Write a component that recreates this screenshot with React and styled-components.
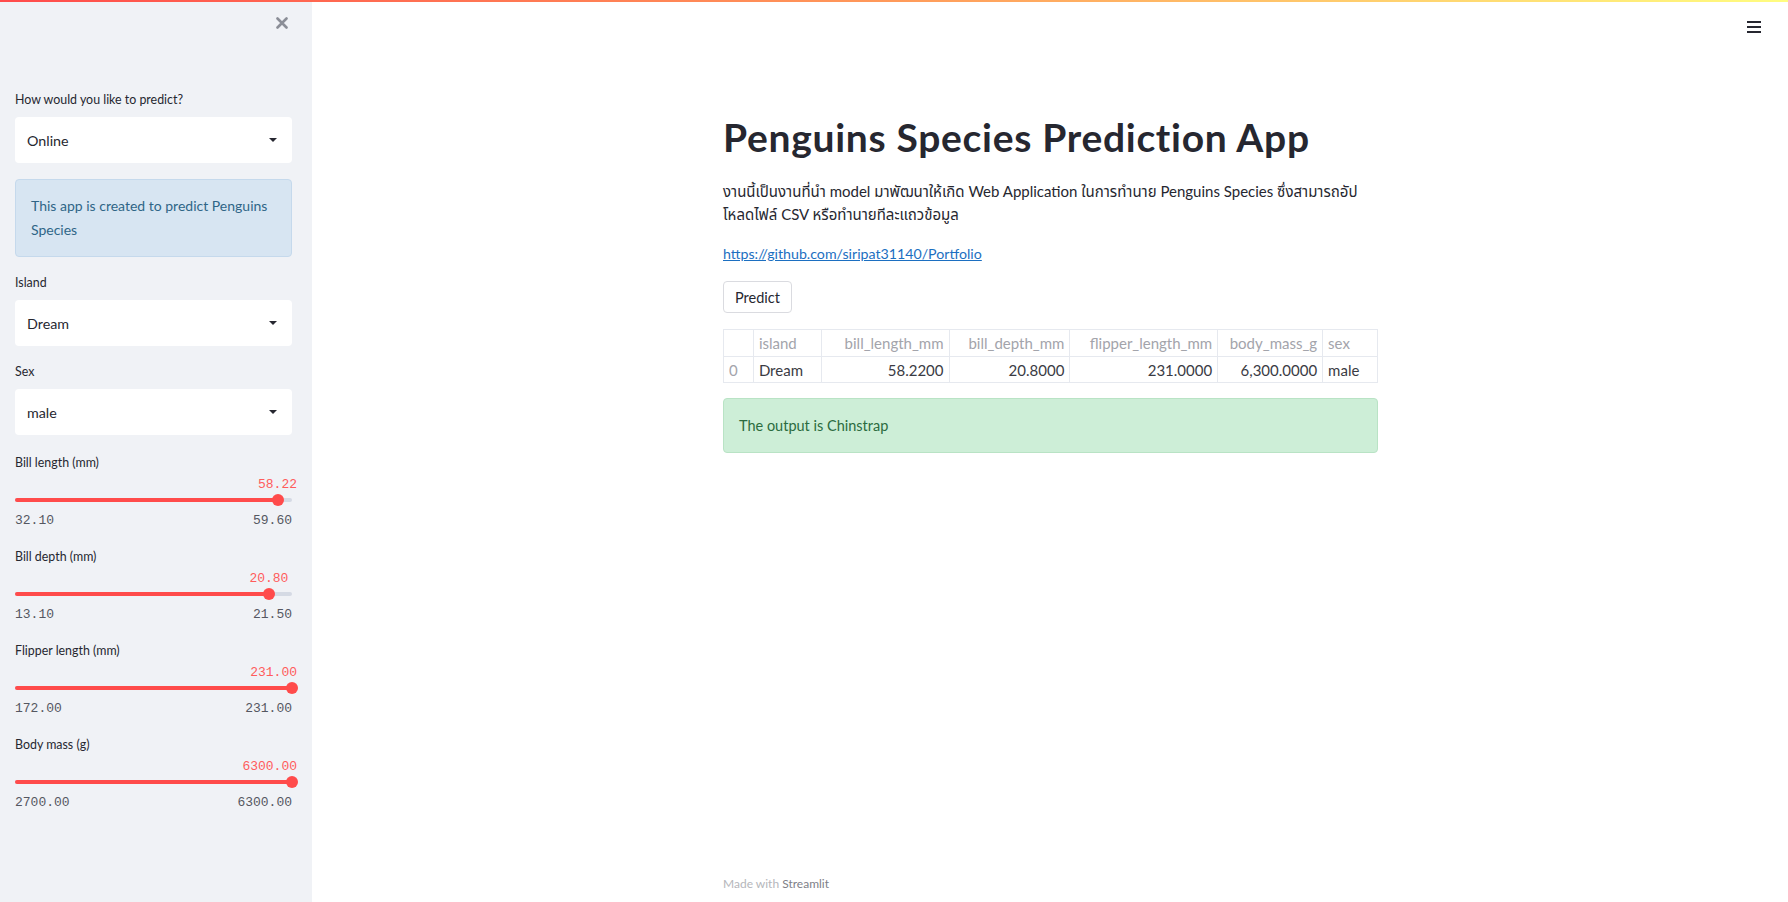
import React from "react";
import styled, { createGlobalStyle } from "styled-components";

const GlobalStyle = createGlobalStyle`
  html, body {
    margin: 0;
    padding: 0;
    background: #ffffff;
    font-family: "Lato", "Noto Sans", "Noto Sans Thai", "Loma", sans-serif;
    color: #262730;
  }
  * {
    box-sizing: border-box;
  }
`;

const sliders = [
  { label: "Bill length (mm)", min: 32.1, max: 59.6, value: 58.22 },
  { label: "Bill depth (mm)", min: 13.1, max: 21.5, value: 20.8 },
  { label: "Flipper length (mm)", min: 172, max: 231, value: 231 },
  { label: "Body mass (g)", min: 2700, max: 6300, value: 6300 },
];

const columns = [
  { key: "idx", title: "", width: 30 },
  { key: "island", title: "island", width: 68 },
  { key: "bill_length_mm", title: "bill_length_mm", width: 128, num: true },
  { key: "bill_depth_mm", title: "bill_depth_mm", width: 121, num: true },
  { key: "flipper_length_mm", title: "flipper_length_mm", width: 148, num: true },
  { key: "body_mass_g", title: "body_mass_g", width: 105, num: true },
  { key: "sex", title: "sex", width: 55 },
];

const row = {
  idx: "0",
  island: "Dream",
  bill_length_mm: "58.2200",
  bill_depth_mm: "20.8000",
  flipper_length_mm: "231.0000",
  body_mass_g: "6,300.0000",
  sex: "male",
};

const TRACK_W = 277;
const CHAR_W = 7.8;

const Caret = () => (
  <svg width="8" height="4" viewBox="0 0 8 4">
    <path d="M0 0 L8 0 L4 4 Z" fill="#262730" />
  </svg>
);

const SelectBox = ({ value }) => (
  <Select>
    <span>{value}</span>
    <Caret />
  </Select>
);

const Slider = ({ label, min, max, value }) => {
  const pct = (value - min) / (max - min);
  const thumbX = pct * TRACK_W;
  const text = value.toFixed(2);
  const w = text.length * CHAR_W;
  // label sits centred over the thumb but never runs past the track end
  const left = Math.min(thumbX - w / 2, TRACK_W + 5 - w);
  return (
    <Widget>
      <Label>{label}</Label>
      <SliderBody>
        <ValueRow>
          <ValueText style={{ left: `${left}px` }}>{text}</ValueText>
        </ValueRow>
        <Track>
          <Filled style={{ width: `${thumbX}px` }} />
          <Thumb style={{ left: `${thumbX}px` }} />
        </Track>
        <MinMax>
          <span>{min.toFixed(2)}</span>
          <span>{max.toFixed(2)}</span>
        </MinMax>
      </SliderBody>
    </Widget>
  );
};

const App = () => {
  return (
    <>
      <GlobalStyle />
      <Page>
        <Decoration />
        <Body>
          <Sidebar>
            <SideHeader>
              <CloseBtn>
                <svg width="12" height="12" viewBox="0 0 12 12">
                  <path
                    d="M1.5 1.5 L10.5 10.5 M10.5 1.5 L1.5 10.5"
                    stroke="#8b8e97"
                    strokeWidth="2.6"
                    strokeLinecap="round"
                  />
                </svg>
              </CloseBtn>
            </SideHeader>
            <SideContent>
              <Widget>
                <Label>How would you like to predict?</Label>
                <SelectBox value="Online" />
              </Widget>
              <Info>This app is created to predict Penguins Species</Info>
              <Widget>
                <Label>Island</Label>
                <SelectBox value="Dream" />
              </Widget>
              <Widget>
                <Label>Sex</Label>
                <SelectBox value="male" />
              </Widget>
              <SliderGroup>
                {sliders.map((s) => (
                  <Slider key={s.label} {...s} />
                ))}
              </SliderGroup>
            </SideContent>
          </Sidebar>

          <Main>
            <TopBar>
              <svg width="14" height="12" viewBox="0 0 14 12">
                <path d="M0 1 H14 M0 6 H14 M0 11 H14" stroke="#262730" strokeWidth="2" />
              </svg>
            </TopBar>
            <Content>
              <Title>Penguins Species Prediction App</Title>
              <Paragraph>
                งานนี้เป็นงานที่นำ model มาพัฒนาให้เกิด Web Application ในการทำนาย Penguins Species
                ซึ่งสามารถอัป<wbr />โหลดไฟล์ CSV หรือทำนายทีละแถวข้อมูล
              </Paragraph>
              <Link href="#">https://github.com/siripat31140/Portfolio</Link>
              <Button>Predict</Button>
              <Table>
                <thead>
                  <tr>
                    {columns.map((c) => (
                      <Th key={c.key} $w={c.width} $num={c.num}>
                        {c.title}
                      </Th>
                    ))}
                  </tr>
                </thead>
                <tbody>
                  <tr>
                    {columns.map((c) => (
                      <Td key={c.key} $num={c.num} $index={c.key === "idx"}>
                        {row[c.key]}
                      </Td>
                    ))}
                  </tr>
                </tbody>
              </Table>
              <Success>The output is Chinstrap</Success>
            </Content>
            <Footer>
              Made with <b>Streamlit</b>
            </Footer>
          </Main>
        </Body>
      </Page>
    </>
  );
};

const Page = styled.div`
  display: flex;
  flex-direction: column;
  min-height: 100vh;
`;

const Decoration = styled.div`
  height: 2px;
  background: linear-gradient(90deg, #ff4b4b 0%, #ff9a5a 50%, #fffd80 100%);
`;

const Body = styled.div`
  flex: 1;
  display: flex;
`;

const Sidebar = styled.aside`
  width: 312px;
  flex-shrink: 0;
  background: #f0f2f6;
  display: flex;
  flex-direction: column;
`;

const SideHeader = styled.div`
  height: 42px;
  display: flex;
  justify-content: flex-end;
  align-items: center;
  padding-right: 24px;
`;

const CloseBtn = styled.div`
  width: 12px;
  height: 12px;
  display: flex;
`;

const SideContent = styled.div`
  padding: 46px 20px 0 15px;
  display: flex;
  flex-direction: column;
  gap: 16px;
`;

const SliderGroup = styled.div`
  display: flex;
  flex-direction: column;
  gap: 16px;
  margin-top: 2px;
`;

const Widget = styled.div`
  display: flex;
  flex-direction: column;
`;

const Label = styled.label`
  font-size: 12.4px;
  line-height: 20px;
  color: #262730;
  margin-bottom: 7px;
`;

const Select = styled.div`
  height: 46px;
  background: #ffffff;
  border-radius: 4px;
  display: flex;
  align-items: center;
  justify-content: space-between;
  padding: 0 15px 0 12px;
  font-size: 14.3px;
  color: #262730;
`;

const Info = styled.div`
  background: #d7e5f2;
  border: 1px solid #c5d9ec;
  border-radius: 4px;
  padding: 14px 10px 14px 15px;
  font-size: 14px;
  line-height: 24px;
  color: #2f6587;
`;

const SliderBody = styled.div`
  width: ${TRACK_W}px;
  display: flex;
  flex-direction: column;
  margin-top: -3px;
`;

const ValueRow = styled.div`
  position: relative;
  height: 16px;
`;

const ValueText = styled.span`
  position: absolute;
  top: 0;
  font-family: "Liberation Mono", "DejaVu Sans Mono", monospace;
  font-size: 13px;
  line-height: 16px;
  color: #ff5c5c;
  white-space: nowrap;
`;

const Track = styled.div`
  position: relative;
  height: 14px;
  display: flex;
  align-items: center;

  &::before {
    content: "";
    position: absolute;
    left: 0;
    right: 0;
    top: 5px;
    height: 4px;
    border-radius: 2px;
    background: #d5dae4;
  }
`;

const Filled = styled.div`
  position: relative;
  height: 4px;
  border-radius: 2px;
  background: #ff4b4b;
`;

const Thumb = styled.div`
  position: absolute;
  top: 1px;
  width: 12px;
  height: 12px;
  margin-left: -6px;
  border-radius: 50%;
  background: #ff4b4b;
`;

const MinMax = styled.div`
  margin-top: 4px;
  display: flex;
  justify-content: space-between;
  font-family: "Liberation Mono", "DejaVu Sans Mono", monospace;
  font-size: 13px;
  line-height: 20px;
  color: #555761;
`;

const Main = styled.main`
  flex: 1;
  display: flex;
  flex-direction: column;
`;

const TopBar = styled.div`
  height: 50px;
  display: flex;
  justify-content: flex-end;
  align-items: center;
  padding-right: 27px;
`;

const Content = styled.section`
  margin-left: 411px;
  width: 655px;
  display: flex;
  flex-direction: column;
  align-items: flex-start;
  padding-top: 59px;
`;

const Title = styled.h1`
  margin: 0 0 17px;
  font-size: 39px;
  line-height: 52px;
  font-weight: 700;
  color: #262730;
  letter-spacing: 0.7px;
  white-space: nowrap;
`;

const Paragraph = styled.p`
  margin: 0 0 18px;
  font-size: 15px;
  line-height: 23px;
  color: #262730;
`;

const Link = styled.a`
  font-size: 14.2px;
  line-height: 20px;
  color: #1c6fc1;
  text-decoration: underline;
  margin-bottom: 17px;
`;

const Button = styled.button`
  height: 32px;
  width: 69px;
  padding: 0;
  background: #ffffff;
  border: 1px solid #dadbe0;
  border-radius: 4px;
  font-family: inherit;
  font-size: 14.5px;
  color: #262730;
  margin-bottom: 16px;
`;

const Table = styled.table`
  width: 655px;
  border-collapse: collapse;
  font-size: 15px;
  margin-bottom: 15px;
`;

const Th = styled.th`
  width: ${({ $w }) => $w}px;
  height: 27px;
  padding: 0 5px;
  border: 1px solid #e6e9ef;
  font-weight: 400;
  color: #a3a4ab;
  text-align: ${({ $num }) => ($num ? "right" : "left")};
  white-space: nowrap;
`;

const Td = styled.td`
  height: 26px;
  padding: 0 5px;
  border: 1px solid #e6e9ef;
  font-weight: 400;
  color: ${({ $index }) => ($index ? "#a3a4ab" : "#3a3b44")};
  text-align: ${({ $num }) => ($num ? "right" : "left")};
  white-space: nowrap;
`;

const Success = styled.div`
  width: 100%;
  height: 55px;
  display: flex;
  align-items: center;
  padding: 0 15px;
  background: #cdeed7;
  border: 1px solid #b9e3c5;
  border-radius: 4px;
  font-size: 14.5px;
  color: #2b6b40;
`;

const Footer = styled.footer`
  margin-top: auto;
  margin-left: 411px;
  padding-bottom: 10px;
  font-size: 12px;
  line-height: 16px;
  color: #b5b6bb;

  b {
    font-weight: 400;
    color: #7e8088;
  }
`;

export default App;
